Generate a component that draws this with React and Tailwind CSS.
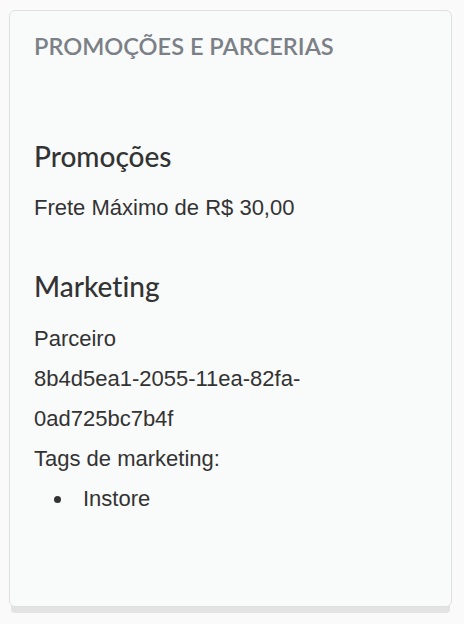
import * as React from "react";

const body = "text-[22px] leading-[40px] text-[#333333] font-['Liberation_Sans',Arial,sans-serif]";
const heading = "text-[28px] leading-[34px] font-medium text-[#333333] font-['Lato',sans-serif] [font-variant-ligatures:none]";

export default function App() {
  return (
    <div className="min-h-[624px] w-[464px] bg-[#fafafa] pt-[10px] pl-[9px]">
      <section className="h-[597px] w-[443px] rounded-[6px] border border-[#e0e0e0] bg-[#f9fafa] px-[24px] pt-[21px] shadow-[0_8px_0_-2px_#e3e3e3]">
        <h2 className="text-[23.6px] leading-[28px] font-semibold text-[#7b8087] font-['Lato',sans-serif]">
          PROMOÇÕES E PARCERIAS
        </h2>

        <h3 className={`${heading} mt-[79px]`}>Promoções</h3>
        <p className={`${body} mt-[15px]`}>Frete Máximo de R$ 30,00</p>

        <h3 className={`${heading} mt-[41px]`}>Marketing</h3>
        <div className={`${body} mt-[16px]`}>
          <p>Parceiro</p>
          <p>
            8b4d5ea1-2055-11ea-82fa-
            <br />
            0ad725bc7b4f
          </p>
          <p>Tags de marketing:</p>
          <ul>
            <li className="flex items-center">
              <span className="ml-[20px] mr-[22px] h-[7px] w-[7px] rounded-full bg-[#333333]" />
              Instore
            </li>
          </ul>
        </div>
      </section>
    </div>
  );
}
